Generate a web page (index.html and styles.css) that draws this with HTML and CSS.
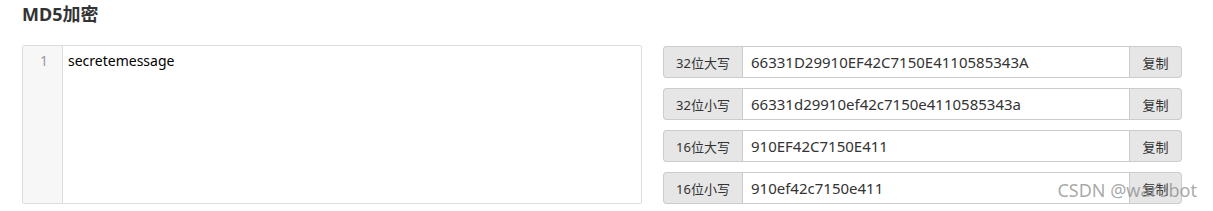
FILE: index.html
```html
<!DOCTYPE html>
<html lang="zh-CN">
<head>
    <meta charset="UTF-8">
    <title>MD5加密</title>
    <link rel="stylesheet" href="styles.css">
</head>
<body>
    <div class="page">
        <h3 class="title">MD5加密</h3>
        <div class="panel">
            <div class="editor">
                <div class="gutter">1</div>
                <div class="code">secretemessage</div>
            </div>
            <div class="results">
                <div class="group">
                    <span class="addon">32位大写</span>
                    <input class="field" type="text" value="66331D29910EF42C7150E4110585343A">
                    <button class="copy">复制</button>
                </div>
                <div class="group">
                    <span class="addon">32位小写</span>
                    <input class="field" type="text" value="66331d29910ef42c7150e4110585343a">
                    <button class="copy">复制</button>
                </div>
                <div class="group">
                    <span class="addon">16位大写</span>
                    <input class="field" type="text" value="910EF42C7150E411">
                    <button class="copy">复制</button>
                </div>
                <div class="group">
                    <span class="addon">16位小写</span>
                    <input class="field" type="text" value="910ef42c7150e411">
                    <button class="copy">复制</button>
                </div>
            </div>
        </div>
        <div class="watermark">CSDN @warobot</div>
    </div>
</body>
</html>
```

FILE: styles.css
```css
* {
    box-sizing: border-box;
    margin: 0;
    padding: 0;
}

body {
    font-family: "Noto Sans", "Noto Sans CJK SC", sans-serif;
    font-size: 14px;
    color: #333;
    background: #fff;
}

.page {
    position: relative;
    width: 1213px;
    height: 211px;
    padding: 3px 31px 0 22px;
}

.title {
    font-size: 18px;
    font-weight: bold;
    color: #333;
    line-height: 22px;
    height: 42px;
}

.panel {
    display: flex;
    gap: 21px;
}

.editor {
    display: flex;
    width: 620px;
    height: 159px;
    border: 1px solid #ddd;
    border-radius: 2px;
    overflow: hidden;
}

.gutter {
    width: 40px;
    background: #f7f7f7;
    border-right: 1px solid #ddd;
    color: #999;
    text-align: right;
    padding: 5px 14px 0 0;
    line-height: 20px;
}

.code {
    flex: 1;
    padding: 5px 5px 0 5px;
    line-height: 20px;
    color: #000;
}

.results {
    flex: 1;
    display: flex;
    flex-direction: column;
    gap: 10px;
    padding-top: 1px;
}

.group {
    display: flex;
    height: 32px;
}

.addon {
    width: 79px;
    background: #e6e6e6;
    border: 1px solid #ccc;
    border-right: none;
    border-radius: 4px 0 0 4px;
    display: flex;
    align-items: center;
    justify-content: center;
    font-size: 13px;
    color: #333;
}

.field {
    flex: 1;
    border: 1px solid #ccc;
    padding: 0 8px;
    font-family: inherit;
    font-size: 15px;
    color: #333;
    outline: none;
}

.copy {
    width: 52px;
    background: #e6e6e6;
    border: 1px solid #ccc;
    border-left: none;
    border-radius: 0 4px 4px 0;
    font-family: inherit;
    font-size: 13px;
    color: #333;
}

.watermark {
    position: absolute;
    right: 16px;
    bottom: 9px;
    font-size: 18px;
    color: rgba(140, 140, 140, 0.75);
}
```
